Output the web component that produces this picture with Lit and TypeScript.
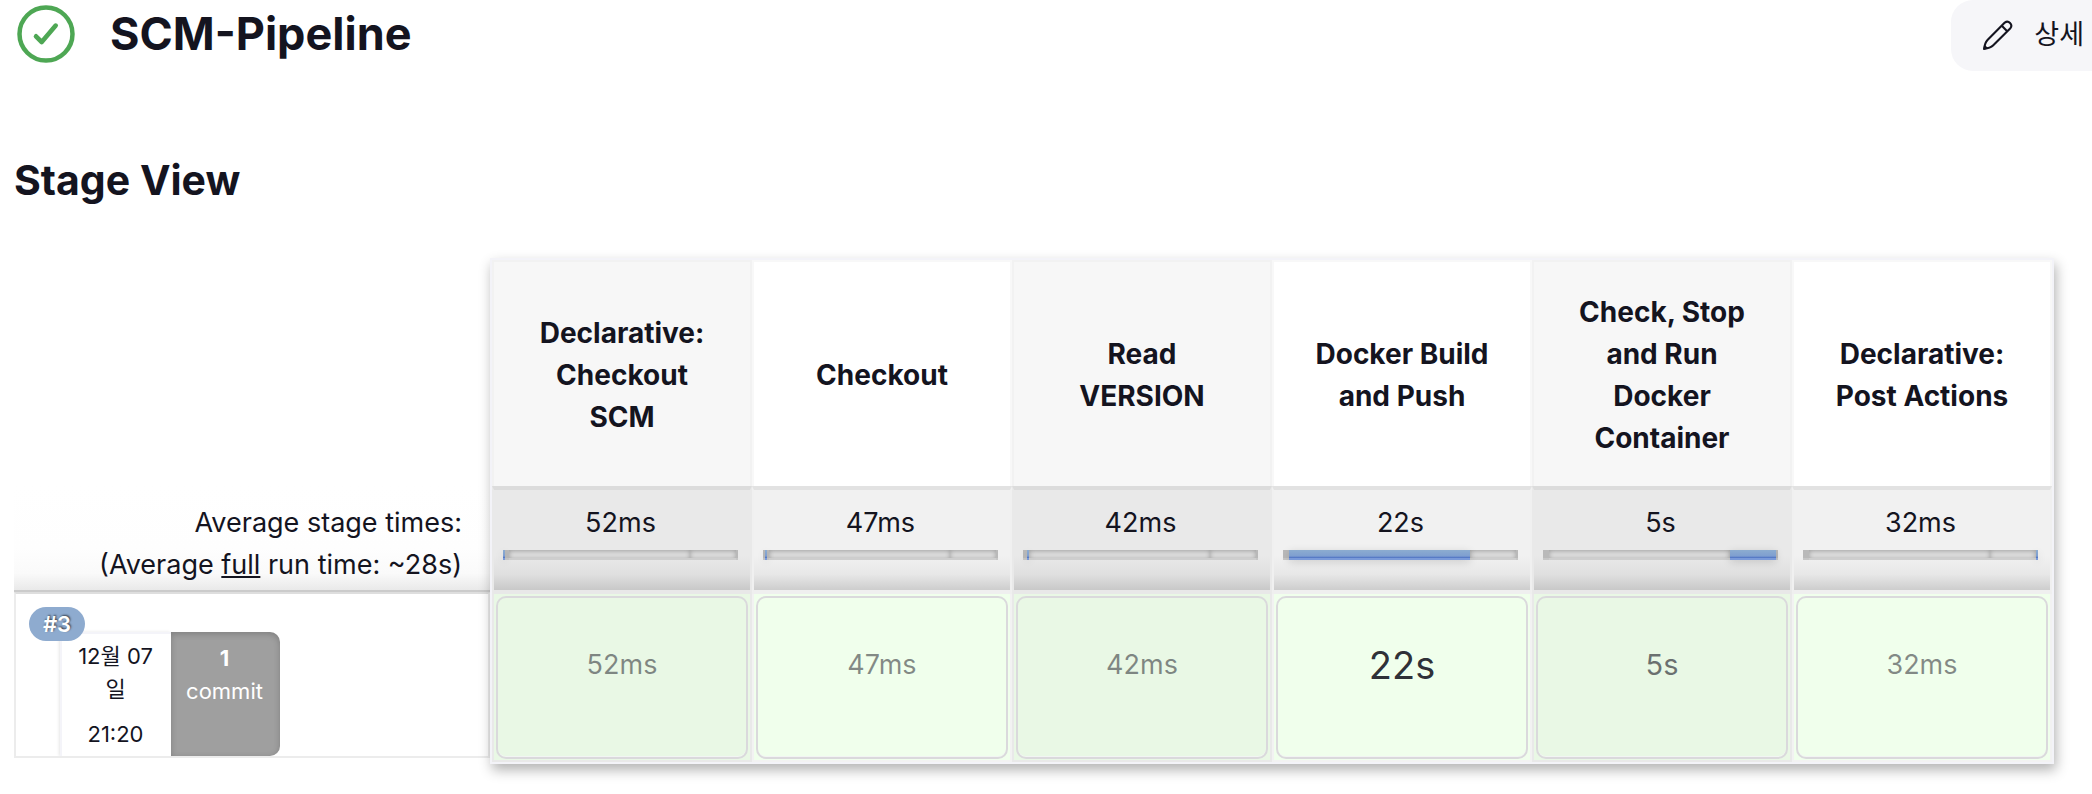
import { LitElement, html, css } from "lit";
import { customElement, property } from "lit/decorators.js";
import { classMap } from "lit/directives/class-map.js";

type Segment = { kind: "edge" | "track" | "value"; weight: number };

interface Stage {
  name: string;
  average: string;
  duration: string;
  emphasis?: "medium" | "large";
  segments: Segment[];
}

const edge = (weight: number): Segment => ({ kind: "edge", weight });
const track = (weight: number): Segment => ({ kind: "track", weight });
const value = (weight: number): Segment => ({ kind: "value", weight });

const STAGES: Stage[] = [
  {
    name: "Declarative: Checkout SCM",
    average: "52ms",
    duration: "52ms",
    segments: [value(2), edge(4), track(181), track(46), edge(2)],
  },
  {
    name: "Checkout",
    average: "47ms",
    duration: "47ms",
    segments: [edge(2), value(2), edge(2), track(181), track(46), edge(2)],
  },
  {
    name: "Read VERSION",
    average: "42ms",
    duration: "42ms",
    segments: [edge(4), value(2), track(181), track(46), edge(2)],
  },
  {
    name: "Docker Build and Push",
    average: "22s",
    duration: "22s",
    emphasis: "large",
    segments: [edge(6), value(181), track(46), edge(2)],
  },
  {
    name: "Check, Stop and Run Docker Container",
    average: "5s",
    duration: "5s",
    emphasis: "medium",
    segments: [edge(6), track(181), value(46), edge(2)],
  },
  {
    name: "Declarative: Post Actions",
    average: "32ms",
    duration: "32ms",
    segments: [edge(6), track(181), track(46), value(2)],
  },
];

@customElement("stage-bar")
export class StageBar extends LitElement {
  @property({ attribute: false }) segments: Segment[] = [];

  static styles = css`
    :host {
      display: flex;
      height: 10px;
    }
    .segment {
      flex-basis: 0;
      min-width: 0;
      box-sizing: border-box;
    }
    .edge {
      background: #b9b9b9;
      border-bottom: 2px solid #c6c6c6;
    }
    .track {
      background: #e0e0e0;
      border-bottom: 2px solid #cecece;
      box-shadow: inset 0 1px 5px rgba(0, 0, 0, 0.3);
    }
    .value {
      background: linear-gradient(#8cacd0 0%, #7f9fd0 60%, #4f73c4 78%, #7a9ad9 82%);
      box-shadow: 0 2px 8px rgba(0, 0, 0, 0.14);
      z-index: 1;
    }
  `;

  render() {
    return this.segments.map(
      (s) => html`<div class="segment ${s.kind}" style="flex-grow:${s.weight}"></div>`
    );
  }
}

@customElement("app-root")
export class AppRoot extends LitElement {
  static styles = css`
    :host {
      display: block;
      overflow: hidden;
      font-family: Inter, "Noto Sans CJK KR", sans-serif;
      font-size: 27px;
      line-height: 42px;
      color: #14141f;
      background: #fff;
    }
    .topbar {
      display: flex;
      align-items: center;
      height: 68px;
      padding-left: 16px;
    }
    .status {
      width: 60px;
      height: 60px;
      flex: none;
    }
    h1,
    h2 {
      margin: 0;
      font-weight: 700;
    }
    h1 {
      flex: 1;
      padding-left: 34px;
      font-size: 45px;
      line-height: 68px;
    }
    h2 {
      padding: 80px 14px 0;
      font-size: 41px;
      line-height: 64px;
    }
    .edit {
      display: flex;
      align-items: center;
      align-self: flex-start;
      gap: 21px;
      height: 71px;
      margin: 0;
      padding: 0 8px 2px 32px;
      border: 0;
      border-radius: 22px 0 0 22px;
      background: #f6f6f9;
      color: inherit;
      font: inherit;
    }
    .edit svg {
      width: 30px;
      height: 30px;
    }
    .view {
      display: flex;
      align-items: flex-start;
      padding: 46px 38px 30px 14px;
    }
    .side {
      flex: 0 0 476px;
      box-sizing: border-box;
      padding-top: 228px;
    }
    .averages {
      box-sizing: border-box;
      height: 106px;
      padding: 16px 28px 0 0;
      text-align: right;
      border-bottom: 2px solid #cbcbcb;
      background: linear-gradient(#fff 0%, #fefefe 60%, #fafafa 84%, #e9e9e9 100%);
    }
    .run {
      display: flex;
      box-sizing: border-box;
      height: 166px;
      padding: 16px 0 0 13px;
      border: 2px solid #ececec;
      border-top-color: #dedede;
      font-size: 22px;
      line-height: 33px;
      overflow: hidden;
    }
    .badge {
      align-self: flex-start;
      z-index: 1;
      width: 56px;
      margin-right: -25px;
      margin-top: -3px;
      border-radius: 17px;
      background: #8eabcf;
      color: #fff;
      font-weight: 600;
      line-height: 34px;
      text-align: center;
      text-shadow: 1px -1px 2px rgba(0, 0, 0, 0.6);
    }
    .changes {
      display: flex;
      margin-top: 22px;
      width: 220px;
    }
    .date,
    .commits {
      flex: 1;
      box-sizing: border-box;
      padding: 6px 10px 0 8px;
      text-align: center;
    }
    .date {
      border: 2px solid #f4f4f9;
      border-width: 2px 0 0 2px;
      box-shadow: -1px 0 3px rgba(0, 0, 0, 0.1);
    }
    .date time {
      display: block;
    }
    .date .hour {
      margin-top: 12px;
    }
    .commits {
      padding-top: 10px;
      background: #9f9f9f;
      color: #fff;
      border-radius: 0 10px 10px 0;
      box-shadow: inset 0 2px 6px rgba(0, 0, 0, 0.2);
    }
    .commits strong {
      display: block;
    }
    .stages {
      flex: 1;
      min-width: 0;
      box-shadow: 2px 6px 12px rgba(0, 0, 0, 0.3);
    }
    table {
      width: 100%;
      table-layout: fixed;
      border-collapse: separate;
      border-spacing: 0;
      border: 2px solid #f3f3f8;
    }
    th,
    td {
      box-sizing: border-box;
      text-align: center;
      background: #fff;
    }
    th {
      height: 226px;
      padding: 28px 38px 26px;
      font-size: 28px;
      font-weight: 700;
      border: 2px solid #f8f8f8;
      border-bottom: 0;
    }
    th.odd {
      background: #f7f7f7;
      border-color: #f2f2f2;
    }
    .average {
      height: 108px;
      padding: 12px 12px 0 9px;
      vertical-align: top;
      border: 2px solid #f0f0f0;
      border-top: 4px solid #e2e2e2;
      border-bottom: 4px solid #efefef;
      background: linear-gradient(#f1f1f1 65%, #e8e8e8 84%, #cdcdcd 100%);
    }
    .average.odd {
      border-color: #dcdcdc #e9e9e9 #e8e8e8;
      background: linear-gradient(#e9e9e9 65%, #e0e0e0 84%, #c8c8c8 100%);
    }
    stage-bar {
      margin-top: 6px;
    }
    .result {
      height: 168px;
      padding: 2px 2px 1px;
      border: 2px solid #f2f2f2;
      border-top: 0;
      vertical-align: top;
      background: #f0ffec;
    }
    .result.odd {
      border-color: #e9e9e9;
      background: #e9f8e5;
    }
    .box {
      display: flex;
      align-items: center;
      justify-content: center;
      box-sizing: border-box;
      height: 163px;
      padding-bottom: 26px;
      border: 2px solid #dad9dc;
      border-radius: 10px;
      box-shadow: inset 0 -1px 0 #f2f5f3;
      color: rgba(20, 20, 31, 0.5);
    }
    .medium {
      font-size: 29px;
      color: rgba(20, 20, 31, 0.6);
    }
    .large {
      font-size: 38px;
      color: rgba(20, 20, 31, 0.9);
    }
  `;

  render() {
    return html`
      <header class="topbar">
        <svg class="status" viewBox="0 0 60 60" fill="none" stroke="#4ea754" role="img" aria-label="Success">
          <circle cx="30" cy="30" r="26.5" stroke-width="4.5" />
          <path d="M20 32.3 25.7 38 39.7 21.6" stroke-width="4.6" stroke-linecap="round" stroke-linejoin="round" />
        </svg>
        <h1>SCM-Pipeline</h1>
        <button class="edit" type="button">
          <svg viewBox="0 0 30 30" fill="none" stroke="#14141f" stroke-width="2.1" stroke-linejoin="round" stroke-linecap="round" aria-hidden="true">
            <path d="M1.2 28.8C1.5 26 2 22.5 4.5 20L21.8 2.6A4 4 0 0 1 27.4 8.2L10 25.5C7.5 28 4 28.5 1.2 28.8ZM18.8 5.8 24.2 11.2" />
            <path d="M1.2 28.8 2 26.6 3.4 28Z" fill="#14141f" />
          </svg>
          상세
        </button>
      </header>
      <main>
        <h2>Stage View</h2>
        <div class="view">
          <section class="side">
            <div class="averages">
              Average stage times:<br />(Average <u>full</u> run time: ~28s)
            </div>
            <div class="run">
              <span class="badge">#3</span>
              <div class="changes">
                <div class="date">
                  <time>12월 07일</time>
                  <time class="hour">21:20</time>
                </div>
                <div class="commits"><strong>1</strong>commit</div>
              </div>
            </div>
          </section>
          <div class="stages">
            <table>
              <thead>
                <tr>
                  ${STAGES.map((s, i) => html`<th scope="col" class=${classMap({ odd: i % 2 === 0 })}>${s.name}</th>`)}
                </tr>
              </thead>
              <tbody>
                <tr>
                  ${STAGES.map(
                    (s, i) => html`<td class=${classMap({ average: true, odd: i % 2 === 0 })}>
                      ${s.average}<stage-bar .segments=${s.segments}></stage-bar>
                    </td>`
                  )}
                </tr>
                <tr>
                  ${STAGES.map(
                    (s, i) => html`<td class=${classMap({ result: true, odd: i % 2 === 0 })}>
                      <div class="box ${s.emphasis ?? ""}">${s.duration}</div>
                    </td>`
                  )}
                </tr>
              </tbody>
            </table>
          </div>
        </div>
      </main>
    `;
  }
}
